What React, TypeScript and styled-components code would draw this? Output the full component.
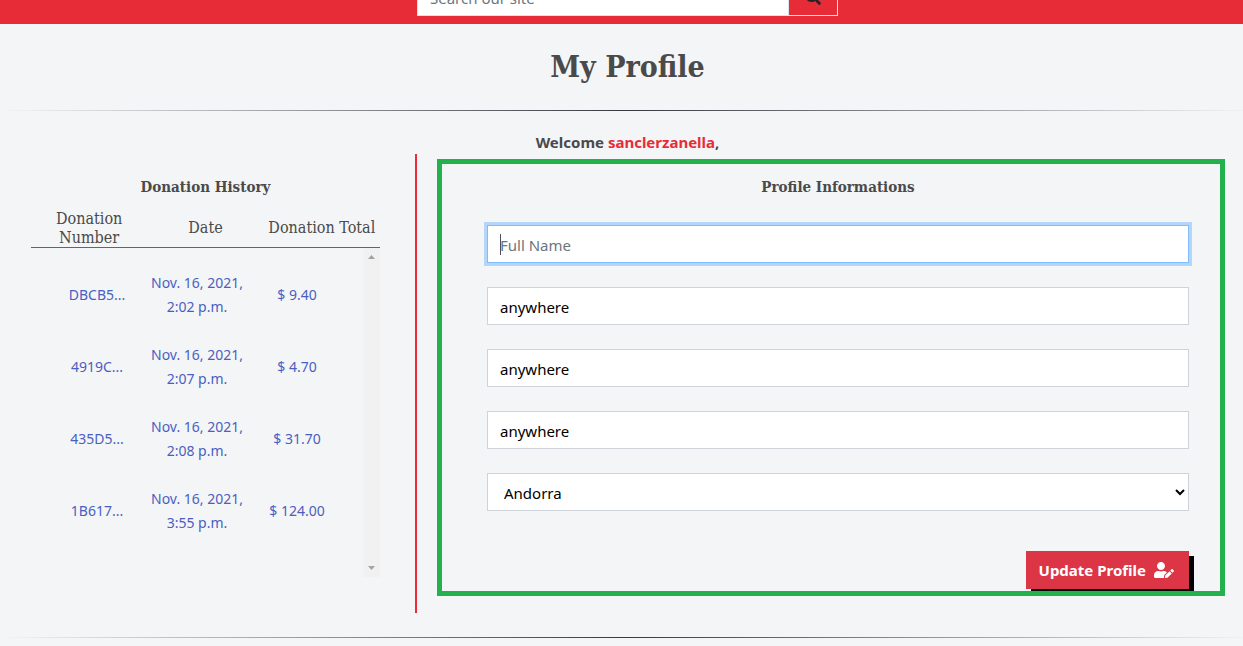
import React from "react";
import styled, { createGlobalStyle } from "styled-components";
import { FaSearch, FaUserEdit } from "react-icons/fa";

const red = "#e82c37";
const ink = "#495057";
const slab = `"DejaVu Serif Condensed", "DejaVu Serif", "Liberation Serif", serif`;
const sans = `"Noto Sans", "Open Sans", sans-serif`;

const GlobalStyle = createGlobalStyle`
  *, *::before, *::after { box-sizing: border-box; }
  body {
    margin: 0;
    background: #f4f5f7;
    color: #4a4a4a;
    font-family: ${sans};
    font-size: 15px;
    line-height: 24px;
    overflow-x: hidden;
  }
`;

const Header = styled.header`
  display: flex;
  justify-content: center;
  align-items: flex-end;
  height: 24px;
  padding: 0 0 8px 12px;
  overflow: hidden;
  background: ${red};
`;

const SearchForm = styled.form`
  display: flex;
  flex: 0 1 421px;
  height: 38px;
`;

const SearchInput = styled.input`
  flex: 1;
  min-width: 0;
  padding: 8px 12px 6px;
  border: 1px solid #dee2e6;
  border-radius: 0;
  background: #fff;
  font: inherit;
  &::placeholder { color: #6c757d; opacity: 1; }
`;

const SearchButton = styled.button`
  display: flex;
  align-items: center;
  justify-content: center;
  width: 49px;
  border: 1px solid #f3dfe3;
  border-left: 0;
  background: ${red};
  color: #212529;
  font-size: 16px;
`;

const PageTitle = styled.h1`
  margin: 0;
  padding: 19px 0 19px 12px;
  color: #4a4a4a;
  font: bold 30px/48px ${slab};
  text-align: center;
`;

const Divider = styled.hr`
  height: 1px;
  margin: 0 -12px 0 0;
  border: 0;
  background: linear-gradient(to right, transparent, #343a40, transparent);
`;

const Welcome = styled.p`
  margin: 0;
  padding: 19px 0 0 12px;
  font-weight: bold;
  text-align: center;
  span { color: ${red}; }
`;

const Columns = styled.main`
  display: grid;
  grid-template-columns: minmax(0, 417fr) minmax(0, 826fr);
  margin-bottom: 24px;
`;

const History = styled.section`
  padding: 21px 35px 36px 31px;
  border-right: 2px solid ${red};
`;

const SectionTitle = styled.h2`
  margin: 0;
  color: #4a4a4a;
  font: bold 15px/24px ${slab};
  text-align: center;
`;

const TableArea = styled.div`
  display: grid;
  margin-top: 9px;
`;

const Table = styled.table`
  display: block;
  grid-area: 1 / 1;
  text-align: center;
  thead, tbody { display: block; }
  tr { display: grid; grid-template-columns: repeat(3, minmax(0, 1fr)); align-items: center; }
  th, td { padding: 0; }
`;

const HeadRow = styled.tr`
  height: 40px;
  border-bottom: 1px solid ${red};
  font: 16px/19px ${slab};
  color: #4a4a4a;
  th { font-weight: normal; white-space: nowrap; }
  th:first-child { white-space: normal; padding: 0 16px; }
`;

const Body = styled.tbody`
  height: 329px;
  padding: 11px 33px 0 16px;
`;

const Row = styled.tr`
  height: 72px;
  font: 14px/24px ${sans};
`;

const OrderLink = styled.a`
  color: #4a5fc1;
  text-decoration: none;
`;

const ScrollTrack = styled.div`
  display: flex;
  flex-direction: column;
  justify-content: space-between;
  align-items: center;
  grid-area: 1 / 1;
  justify-self: end;
  align-self: end;
  width: 17px;
  height: 329px;
  padding: 7px 0;
  background: #f1f1f1;
`;

const Arrow = styled.svg`
  display: block;
  width: 7px;
  height: 4px;
  fill: #a3a3a3;
`;

const Panel = styled.section`
  margin: 5px 18px 17px 20px;
  padding: 11px 31px 2px 45px;
  border: 5px solid #22b14c;
  overflow: hidden;
`;

const ProfileForm = styled.form`
  display: flex;
  flex-direction: column;
  gap: 24px;
  margin-top: 26px;
`;

const Field = styled.input<{ $active?: boolean }>`
  width: 100%;
  height: 38px;
  padding: 8px 12px 6px;
  border: 1px solid ${(p) => (p.$active ? "#80bdff" : "#ced4da")};
  border-radius: 0;
  outline: 0;
  background: ${(p) =>
    p.$active ? `linear-gradient(${ink}, ${ink}) 12px 8px / 1px 21px no-repeat #fff` : "#fff"};
  box-shadow: ${(p) => (p.$active ? "0 0 0 3px #b4d6fb" : "none")};
  color: #000;
  caret-color: transparent;
  font: inherit;
  &::placeholder { color: #6c757d; opacity: 1; }
`;

const CountrySelect = styled.select`
  width: 100%;
  height: 38px;
  padding: 8px 12px 6px;
  border: 1px solid #ced4da;
  border-radius: 0;
  background: #fff;
  color: #000;
  font: inherit;
`;

const SubmitButton = styled.button`
  display: flex;
  align-items: center;
  align-self: flex-end;
  gap: 8px;
  height: 38px;
  margin-top: 16px;
  padding: 0 15px 0 13px;
  border: 0;
  background: #dc3545;
  box-shadow: 5px 5px 0 #000;
  color: #fff;
  font: bold 15px/24px ${sans};
  svg { width: 20px; height: 16px; }
`;

const donations = [
  ["DBCB5...", "2:02 p.m.", "$ 9.40"],
  ["4919C...", "2:07 p.m.", "$ 4.70"],
  ["435D5...", "2:08 p.m.", "$ 31.70"],
  ["1B617...", "3:55 p.m.", "$ 124.00"],
];

export default function App() {
  return (
    <>
      <GlobalStyle />
      <Header>
        <SearchForm role="search">
          <SearchInput type="search" placeholder="Search our site" aria-label="Search our site" />
          <SearchButton type="submit" aria-label="Search"><FaSearch /></SearchButton>
        </SearchForm>
      </Header>
      <PageTitle>My Profile</PageTitle>
      <Divider />
      <Welcome>Welcome <span>sanclerzanella</span>,</Welcome>
      <Columns>
        <History>
          <SectionTitle>Donation History</SectionTitle>
          <TableArea>
            <Table>
              <thead>
                <HeadRow>
                  <th scope="col">Donation Number</th>
                  <th scope="col">Date</th>
                  <th scope="col">Donation Total</th>
                </HeadRow>
              </thead>
              <Body>
                {donations.map(([id, time, total]) => (
                  <Row key={id}>
                    <td><OrderLink href="#">{id}</OrderLink></td>
                    <td><OrderLink href="#">Nov. 16, 2021,<br />{time}</OrderLink></td>
                    <td><OrderLink href="#">{total}</OrderLink></td>
                  </Row>
                ))}
              </Body>
            </Table>
            <ScrollTrack aria-hidden="true">
              <Arrow viewBox="0 0 7 4"><path d="M0 4L3.5 0L7 4Z" /></Arrow>
              <Arrow viewBox="0 0 7 4"><path d="M0 0L3.5 4L7 0Z" /></Arrow>
            </ScrollTrack>
          </TableArea>
        </History>
        <Panel>
          <SectionTitle>Profile Informations</SectionTitle>
          <ProfileForm>
            <Field $active placeholder="Full Name" aria-label="Full Name" />
            <Field defaultValue="anywhere" aria-label="Street Address" />
            <Field defaultValue="anywhere" aria-label="Town or City" />
            <Field defaultValue="anywhere" aria-label="County" />
            <CountrySelect defaultValue="AD" aria-label="Country">
              <option value="AD">Andorra</option>
            </CountrySelect>
            <SubmitButton type="submit">Update Profile <FaUserEdit /></SubmitButton>
          </ProfileForm>
        </Panel>
      </Columns>
      <Divider />
    </>
  );
}
